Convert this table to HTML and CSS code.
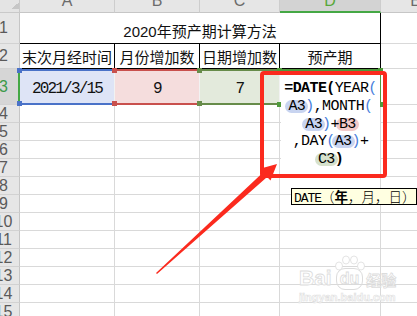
FILE: index.html
```html
<!DOCTYPE html>
<html lang="zh-CN">
<head>
<meta charset="utf-8">
<title>预产期计算</title>
<link rel="stylesheet" href="styles.css">
</head>
<body>
<div class="sheet">
  <div class="corner"></div>
  <div class="ch"><span>A</span></div>
  <div class="ch"><span>B</span></div>
  <div class="ch"><span>C</span></div>
  <div class="ch sel"><span>D</span></div>
  <div class="ch"><span>E</span></div>

  <div class="rh"><span>1</span></div>
  <div class="c title">2020年预产期计算方法</div>
  <div class="c"></div>

  <div class="rh"><span>2</span></div>
  <div class="c hd">末次月经时间</div>
  <div class="c hd">月份增加数</div>
  <div class="c hd">日期增加数</div>
  <div class="c hd">预产期</div>
  <div class="c"></div>

  <div class="rh sel"><span>3</span></div>
  <div class="c ref blue">2021/3/15<i class="h t"></i><i class="h b"></i></div>
  <div class="c ref red">9<i class="h t"></i><i class="h b"></i></div>
  <div class="c ref green">7<i class="h t"></i><i class="h b"></i></div>
  <div class="c act"><i class="h t"></i><i class="h b"></i><i class="h t r"></i><i class="h b r"></i></div>
  <div class="c"></div>

  <div class="rh"><span>4</span></div><div class="c"></div><div class="c"></div><div class="c"></div><div class="c"></div><div class="c"></div>
  <div class="rh"><span>5</span></div><div class="c"></div><div class="c"></div><div class="c"></div><div class="c"></div><div class="c"></div>
  <div class="rh"><span>6</span></div><div class="c"></div><div class="c"></div><div class="c"></div><div class="c"></div><div class="c"></div>
  <div class="rh"><span>7</span></div><div class="c"></div><div class="c"></div><div class="c"></div><div class="c"></div><div class="c"></div>
  <div class="rh"><span>8</span></div><div class="c"></div><div class="c"></div><div class="c"></div><div class="c"></div><div class="c"></div>
  <div class="rh"><span>9</span></div><div class="c"></div><div class="c"></div><div class="c"></div><div class="c"></div><div class="c"></div>
  <div class="rh"><span>10</span></div><div class="c"></div><div class="c"></div><div class="c"></div><div class="c"></div><div class="c"></div>
  <div class="rh"><span>11</span></div><div class="c"></div><div class="c"></div><div class="c"></div><div class="c"></div><div class="c"></div>
  <div class="rh"><span>12</span></div><div class="c"></div><div class="c"></div><div class="c"></div><div class="c"></div><div class="c"></div>
  <div class="rh"><span>13</span></div><div class="c"></div><div class="c"></div><div class="c"></div><div class="c"></div><div class="c"></div>
  <div class="rh"><span>14</span></div><div class="c"></div><div class="c"></div><div class="c"></div><div class="c"></div><div class="c"></div>
  <div class="rh"><span>15</span></div><div class="c"></div><div class="c"></div><div class="c"></div><div class="c"></div><div class="c"></div>
</div>

<div class="edit">
  <div><b>=DATE(</b>YEAR<span class="bp">(</span></div>
  <div><span class="p pa">A3</span><span class="bp">)</span>,MONTH<span class="bp">(</span></div>
  <div><span class="p pa">A3</span><span class="bp">)</span>+<span class="p pb">B3</span></div>
  <div>,DAY<span class="bp">(</span><span class="p pa">A3</span><span class="bp">)</span>+</div>
  <div><span class="p pc">C3</span><b>)</b></div>
</div>

<div class="tip"><span class="m">DATE</span><span class="z">（<b>年</b>，月，日）</span></div>

<div class="wm">
  <div class="wm1"><span>Bai</span><span class="paw">du<svg class="toes" width="34" height="16" viewBox="0 0 34 16"><ellipse cx="6" cy="11" rx="3.5" ry="4"/><ellipse cx="13" cy="5" rx="3.5" ry="4"/><ellipse cx="21" cy="5" rx="3.5" ry="4"/><ellipse cx="28" cy="11" rx="3.5" ry="4"/></svg></span><span class="jy">经验</span></div>
  <div class="wm2">jingyan.baidu.com</div>
</div>

<svg class="note" width="417" height="316" viewBox="0 0 417 316">
  <rect x="262" y="73" width="123" height="103" rx="2" fill="none" stroke="#fb2a1e" stroke-width="4"/>
  <polygon fill="#fb2a1e" points="156,273 263,172.5 259.8,168.8 277,164 270.5,180.6 267.1,176.9 157,274"/>
</svg>
</body>
</html>
```
FILE: styles.css
```css
* { box-sizing: border-box; margin: 0; padding: 0; }
html, body { width: 417px; height: 316px; overflow: hidden; background: #fff; }
body { position: relative; font-family: "Liberation Sans", "Noto Sans CJK SC", sans-serif; color: #111; }

.sheet {
  display: grid;
  grid-template-columns: 20px 95px 85px 80px 101px 70px;
  grid-template-rows: 13px 31px 25px 36px repeat(12, 18px);
}

.corner {
  background: #e4e4e4 linear-gradient(to bottom right, transparent 62%, #c6c6c6 62%) no-repeat 9px 0 / 10px 9px;
  border-right: 1px solid #c9c9c9;
  border-bottom: 1px solid #c9c9c9;
}
.ch {
  background: #e6e6e6;
  border-right: 1px solid #cdcdcd;
  border-bottom: 1px solid #c6c6c6;
  overflow: hidden;
  text-align: center;
  color: #6b6b6b;
  font-size: 16px;
  line-height: 16px;
}
.ch span { display: block; margin-top: -7px; }
.ch.sel { background: #d3d3d3; border-bottom: 2px solid #45a845; color: #58a83a; }

.rh {
  background: #e6e6e6;
  border-right: 1px solid #c6c6c6;
  border-bottom: 1px solid #d2d2d2;
  display: flex;
  align-items: center;
  font-size: 16px;
  color: #5a5a5a;
}
.rh span { flex: none; width: 35px; margin-left: -14px; text-align: center; }
.rh.sel { background: #d6d6d6; border-right: 2px solid #45a845; color: #3c9a4a; }

.c {
  border-right: 1px solid #d9d9d9;
  border-bottom: 1px solid #d9d9d9;
  display: flex;
  align-items: center;
  justify-content: center;
  white-space: nowrap;
  font-size: 15px;
}
.title {
  grid-column: span 4;
  border-right-color: #000;
  border-bottom-color: #000;
  padding-top: 4px;
}
.hd {
  font-family: "Noto Sans CJK SC", sans-serif;
  border-right-color: #000;
  border-bottom-color: #000;
}

.ref {
  position: relative;
  border-top: 2px solid;
  border-bottom: 2px solid;
  border-right-color: #f2f2f2;
  padding-top: 4px;
  font-family: "Liberation Mono", monospace;
  font-size: 16px;
  letter-spacing: -1.8px;
}
.ref.blue { background: #dee4f6; border-top-color: #4a72c8; border-bottom-color: #4a72c8; }
.ref.red { background: #f5dddd; border-top-color: #c9504d; border-bottom-color: #c9504d; }
.ref.green { background: #e3eadc; border-top-color: #678c4a; border-bottom-color: #678c4a; }
.act { position: relative; border-top: 2px solid #4f9a3c; border-right: 2px solid #4f9a3c; }

.h { position: absolute; left: -3px; width: 5px; height: 5px; }
.h.t { top: -3px; }
.h.b { bottom: -3px; }
.h.r { left: auto; right: -4px; }
.blue .h { background: #4a72c8; }
.red .h { background: #c9504d; }
.green .h { background: #678c4a; }
.act .h { background: #4f9a3c; }

.edit {
  position: absolute;
  left: 281px;
  top: 71px;
  width: 99px;
  height: 105px;
  z-index: 1;
  background: #fff;
  padding-top: 9px;
  font-family: "Liberation Mono", monospace;
  font-size: 15px;
  letter-spacing: -0.6px;
  line-height: 17.75px;
  text-align: center;
  white-space: nowrap;
  color: #000;
}
.edit b { font-weight: bold; }
.bp { color: #4a7fdc; }
.p { position: relative; }
.p::before {
  content: "";
  position: absolute;
  left: -3px;
  right: -3px;
  top: 2px;
  bottom: 2px;
  border-radius: 7px;
  z-index: -1;
}
.pa::before { background: #c8d4f0; }
.pb::before { background: #f2c9c9; }
.pc::before { background: #d6e1cc; }

.tip {
  position: absolute;
  left: 291px;
  top: 188px;
  width: 126px;
  height: 17px;
  z-index: 2;
  background: #ffffe1;
  border: 1px solid #000;
  padding-left: 2px;
  white-space: nowrap;
  font-size: 13.5px;
  line-height: 14px;
  color: #000;
}
.tip .m { font-family: "Liberation Mono", monospace; font-size: 13px; letter-spacing: -1.05px; }
.tip .z { font-family: "Noto Sans CJK SC", sans-serif; font-weight: 300; }
.tip b { font-weight: bold; }

.wm {
  position: absolute;
  left: 299px;
  top: 266px;
  z-index: 2;
  color: #fff;
  -webkit-text-stroke: 0.8px #dcdcdc;
  font-weight: bold;
  white-space: nowrap;
}
.wm1 { display: flex; align-items: flex-end; font-size: 21px; line-height: 24px; }
.paw { position: relative; margin-left: 4px; font-size: 16px; line-height: 20px; padding: 0 3px; border: 1px solid #dcdcdc; border-radius: 9px; }
.toes { position: absolute; left: -4px; top: -14px; fill: #fff; stroke: #dcdcdc; stroke-width: 0.8; }
.jy { margin-left: 3px; font-family: "Noto Sans CJK SC", sans-serif; font-size: 15px; line-height: 20px; }
.wm2 { font-size: 11px; line-height: 14px; -webkit-text-stroke: 0.6px #dedede; }

.note { position: absolute; left: 0; top: 0; z-index: 3; pointer-events: none; }
```
